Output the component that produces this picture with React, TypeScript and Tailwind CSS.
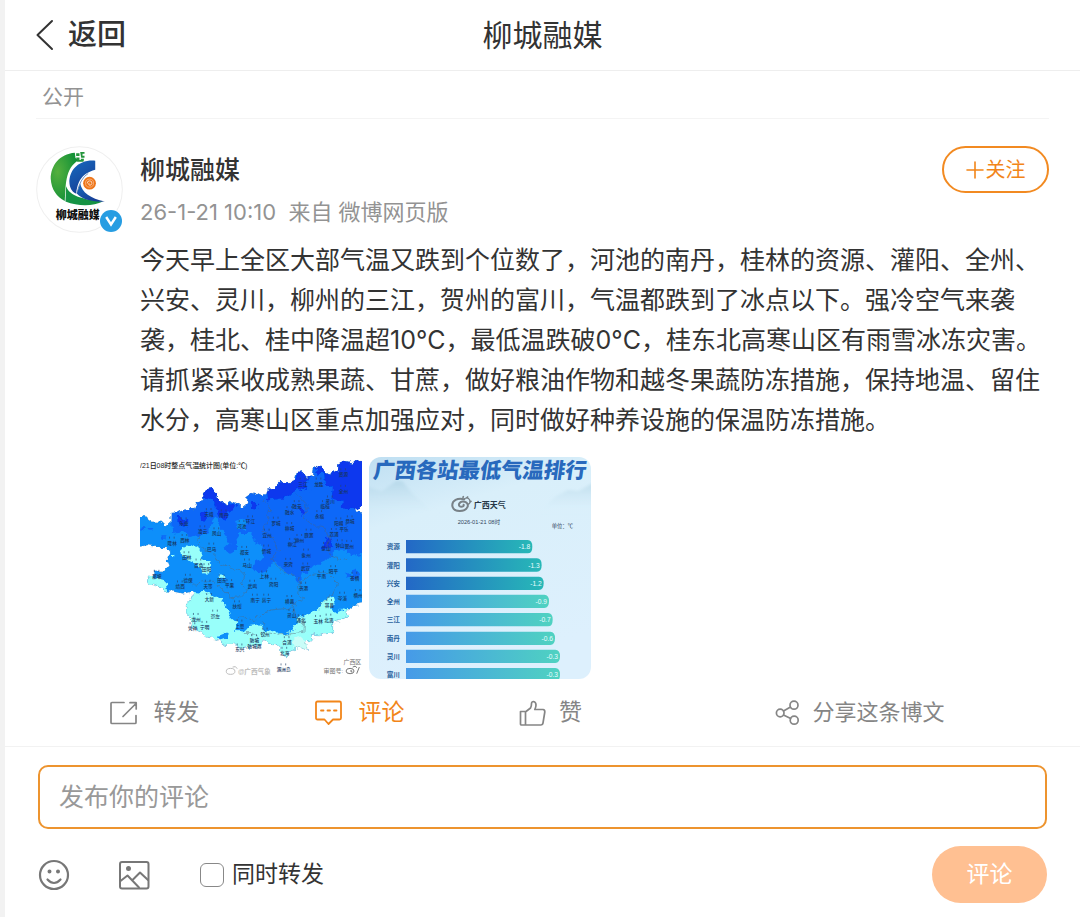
import React from "react";

const svgFont = "'Liberation Sans', 'Noto Sans CJK SC', sans-serif";

const mapLabels: [number, number, string][] = [
  [640, 76, "资源"], [640, 126, "全州"], [518, 104, "三江"], [566, 104, "龙胜"], [600, 158, "灵川"],
  [500, 172, "融安"], [585, 172, "临桂"], [478, 190, "融水"], [568, 202, "永福"], [235, 196, "天峨"],
  [280, 200, "南丹"], [160, 224, "乐业"], [360, 218, "环江"], [334, 232, "河池"], [437, 222, "罗城"],
  [478, 238, "柳城"], [626, 224, "阳朔"], [660, 218, "恭城"], [642, 242, "平乐"], [216, 248, "凌云"],
  [258, 254, "凤山"], [410, 258, "宜州"], [536, 258, "鹿寨"], [612, 256, "荔浦"], [124, 282, "隆林"],
  [162, 274, "西林"], [508, 274, "柳州"], [486, 286, "柳江"], [630, 290, "钟山"], [658, 292, "贺州"],
  [243, 300, "巴马"], [342, 310, "都安"], [408, 306, "忻城"], [588, 298, "蒙山"], [528, 318, "象州"],
  [168, 326, "田林"], [204, 348, "百色"], [228, 362, "田阳"], [350, 348, "马山"], [474, 346, "来宾"],
  [526, 360, "武宣"], [610, 368, "昭平"], [574, 384, "平南"], [674, 388, "苍梧"], [78, 382, "那坡"],
  [172, 394, "德保"], [274, 396, "田东"], [297, 410, "平果"], [402, 384, "上林"], [366, 412, "武鸣"],
  [430, 406, "宾阳"], [148, 414, "靖西"], [232, 412, "天等"], [520, 418, "贵港"], [637, 448, "岑溪"],
  [684, 440, "梧州"], [236, 452, "大新"], [374, 454, "南宁"], [408, 454, "邕宁"], [478, 458, "横县"],
  [320, 474, "扶绥"], [598, 470, "容县"], [254, 502, "崇左"], [196, 512, "龙州"], [484, 500, "灵山"],
  [596, 514, "北流"], [564, 518, "玉林"], [512, 516, "浦北"], [186, 540, "凭祥"], [222, 536, "宁明"],
  [328, 532, "上思"], [404, 556, "钦州"], [372, 576, "防城"], [470, 582, "合浦"], [372, 595, "防城港"],
  [328, 604, "东兴"], [463, 614, "北海"], [460, 664, "涠洲岛"],
];

const rankRows: { name: string; value: string; end: number; y: number; cold: boolean }[] = [
  { name: "资源", value: "-1.8", end: 502, y: 270, cold: true },
  { name: "灌阳", value: "-1.3", end: 530, y: 325, cold: true },
  { name: "兴安", value: "-1.2", end: 536, y: 380, cold: true },
  { name: "全州", value: "-0.9", end: 552, y: 434, cold: false },
  { name: "三江", value: "-0.7", end: 563, y: 489, cold: false },
  { name: "南丹", value: "-0.6", end: 570, y: 545, cold: false },
  { name: "灵川", value: "-0.3", end: 585, y: 599, cold: false },
  { name: "富川", value: "-0.3", end: 585, y: 654, cold: false },
];

const regionOutline =
  "M0 196 L48 204 L65 216 L92 216 L106 230 L118 222 L120 190 L142 188 L160 180 L190 178 L200 158 L218 154 L214 136 L226 118 L240 116 L258 130 L262 150 L278 156 L286 168 L304 154 L322 162 L334 174 L350 160 L352 140 L372 126 L394 136 L408 130 L412 116 L432 120 L444 104 L440 96 L468 98 L490 96 L496 70 L522 66 L530 84 L546 74 L548 54 L566 46 L582 64 L602 72 L622 60 L626 44 L648 34 L668 38 L680 28 L720 34 L720 166 L678 176 L682 190 L720 194 L720 458 L672 466 L650 484 L656 500 L640 510 L624 516 L608 512 L608 550 L580 556 L548 552 L544 570 L526 584 L532 604 L508 594 L480 606 L468 624 L456 606 L440 590 L412 582 L400 572 L384 590 L352 596 L330 600 L314 584 L280 586 L262 572 L222 562 L210 546 L180 532 L182 508 L166 490 L166 466 L182 446 L190 434 L180 426 L156 432 L130 426 L104 426 L86 412 L52 404 L46 388 L64 378 L72 364 L102 364 L116 348 L108 330 L116 308 L104 292 L76 292 L48 286 L0 296 Z";

function TemperatureMap() {
  return (
    <svg viewBox="27 21 669 669" className="block size-full" role="img" aria-label="21日08时整点气温统计图">
      <defs>
        <clipPath id="region">
          <path d={regionOutline} />
        </clipPath>
        <filter id="jagged" filterUnits="userSpaceOnUse" x="0" y="0" width="720" height="700">
          <feTurbulence type="fractalNoise" baseFrequency="0.06" numOctaves="2" seed="4" result="noise" />
          <feDisplacementMap in="SourceGraphic" in2="noise" scale="22" xChannelSelector="R" yChannelSelector="G" />
        </filter>
      </defs>
      <rect x="27" y="21" width="669" height="669" fill="#fff" />
      <g filter="url(#jagged)">
        <g clipPath="url(#region)">
          <rect x="0" y="0" width="720" height="700" fill="#0c8ffa" />
          <path
            d="M118 180 L220 90 L720 20 L720 310 L660 320 L650 300 L620 300 L590 330 L550 348 L530 370 L510 372 L512 400 L500 398 L496 374 L460 366 L436 336 L420 340 L416 362 L384 374 L368 356 L376 334 L398 328 L396 290 L370 276 L360 250 L330 250 L318 268 L320 300 L298 312 L280 300 L300 280 L272 240 L256 200 L238 226 L236 250 L206 256 L180 262 L160 244 L124 250 Z"
            fill="#0867f8"
          />
          <path d="M214 100 L260 110 L288 166 L316 162 L314 180 L290 190 L284 214 L268 206 L258 172 L240 146 L214 144 Z" fill="#0738ee" />
          <path d="M404 104 L446 98 L496 90 L500 60 L536 66 L542 100 L524 118 L500 114 L488 132 L456 146 L410 152 Z" fill="#0738ee" />
          <path d="M544 40 L590 40 L720 20 L720 180 L668 178 L636 176 L634 154 L604 146 L608 118 L584 100 L582 68 L560 70 Z" fill="#0738ee" />
          <path d="M542 76 L560 70 L582 74 L584 100 L550 116 L540 130 L528 104 Z" fill="#0867f8" />
          <g fill="#0738ee">
            <ellipse cx="372" cy="166" rx="11" ry="10" />
            <ellipse cx="216" cy="200" rx="12" ry="12" />
            <path d="M138 202 L152 204 L170 216 L164 234 L144 230 Z" />
            <ellipse cx="516" cy="184" rx="9" ry="14" />
            <path d="M588 262 L602 268 L606 286 L590 302 L578 294 Z" />
          </g>
          <g fill="#0867f8">
            <circle cx="36" cy="237" r="5" />
            <ellipse cx="57" cy="239" rx="7" ry="4" />
            <circle cx="99" cy="262" r="6" />
            <circle cx="651" cy="378" r="7" />
            <path d="M664 366 L682 360 L690 378 L680 392 L664 386 Z" />
          </g>
          <path d="M314 214 L338 206 L350 224 L340 240 L320 238 Z" fill="#0c8ffa" />
          <g fill="#98fffa">
            <path d="M150 292 L174 286 L200 292 L210 312 L214 328 L236 340 L242 362 L232 372 L218 372 L210 354 L178 338 L154 316 Z" />
            <path d="M27 378 L62 380 L84 390 L108 398 L114 440 L40 430 Z" />
            <ellipse cx="274" cy="381" rx="10" ry="7" />
            <circle cx="127" cy="316" r="4" />
            <path d="M140 440 L186 430 L204 432 L216 426 L232 430 L250 446 L270 444 L276 460 L290 472 L298 500 L310 510 L320 520 L314 542 L346 544 L356 530 L388 526 L398 546 L430 542 L456 556 L484 548 L502 520 L504 502 L522 500 L550 486 L570 472 L582 452 L608 442 L614 460 L602 476 L618 490 L646 478 L670 490 L640 640 L200 620 Z" />
          </g>
          <path d="M504 558 L528 576 L532 604 L490 600 L486 578 Z" fill="#c9fdf8" />
          <path d="M262 560 L280 552 L292 556 L286 568 L268 574 Z" fill="#0c8ffa" />
        </g>
        <g fill="none" stroke="#596579" strokeWidth="2" opacity="0.7">
          <path d="M206 250 L200 278 L220 300 L250 314 L272 344 L310 356 L342 372 L332 400 L350 424 L330 442 L300 446 M188 412 L214 394 L250 396 L280 424 L300 446" />
          <path d="M400 150 L418 180 L410 214 L396 240 L430 270 L444 304 L424 324 L440 350 L456 368 L494 374 L510 398 L502 424 L520 450 L486 470 L494 502 L520 516 L518 550" />
          <path d="M494 130 L534 172 L520 204 L550 228 L590 238 L600 270 L590 300 L604 320 L648 330 M510 398 L548 374 L590 370 L620 400 L604 438 L574 462 L566 484" />
          <path d="M318 508 L350 504 L370 514 L396 494 L420 482 L486 476 M396 520 L404 550 L440 558 L518 550 M340 550 L364 550 L382 568" />
          <path d={regionOutline} stroke="#7c8998" strokeWidth="1" />
        </g>
      </g>
      <g fontFamily={svgFont} fill="#17355c" textAnchor="middle">
        {mapLabels.map(([x, y, name]) => (
          <text key={name} x={x} y={y + 3} fontSize="14" fontWeight="500">
            {name}
          </text>
        ))}
      </g>
      <g>
        {mapLabels.map(([x, y, name]) => (
          <path key={name} d={`M${x - 8} ${y - 21} v6 M${x + 6} ${y - 21} v6`} stroke="#29456d" strokeWidth="2" />
        ))}
      </g>
      <text x="27" y="54" fontFamily={svgFont} fontSize="21" fontWeight="500" fill="#222">
        /21日08时整点气温统计图(单位:℃)
      </text>
      <g fontFamily={svgFont} fontSize="20" fill="#777">
        <text x="640" y="646" fontSize="18">广西区</text>
        <text x="580" y="671" fontSize="18">审图号:</text>
        <g fill="none" stroke="#777" strokeWidth="3">
          <ellipse cx="660" cy="666" rx="12" ry="8" />
          <path d="M668 654 q8 -6 13 2 M660 666 q8 -4 5 4 M680 674 l8 -20" />
        </g>
        <g fill="none" stroke="#bbb" strokeWidth="3">
          <ellipse cx="300" cy="667" rx="13" ry="9" />
          <path d="M306 654 q10 -5 14 5" />
        </g>
        <text x="322" y="674" fill="#bbb" fontWeight="700">@广西气象</text>
      </g>
    </svg>
  );
}

function RankingChart() {
  return (
    <svg viewBox="12 21 666 666" className="block size-full" role="img" aria-label="广西各站最低气温排行">
      <defs>
        <linearGradient id="sky" x1="0" y1="0" x2="0.3" y2="1">
          <stop offset="0" stopColor="#bfdff2" />
          <stop offset="0.3" stopColor="#d9effa" />
          <stop offset="1" stopColor="#ddf0fd" />
        </linearGradient>
        <linearGradient id="cold">
          <stop offset="0" stopColor="#2368c6" />
          <stop offset="1" stopColor="#27b8b7" />
        </linearGradient>
        <linearGradient id="mild">
          <stop offset="0" stopColor="#469ae8" />
          <stop offset="1" stopColor="#4fd2c1" />
        </linearGradient>
        <linearGradient id="hill" x1="0" y1="0" x2="0" y2="1">
          <stop offset="0" stopColor="#a2cadd" stopOpacity="0.5" />
          <stop offset="0.9" stopColor="#d9effa" stopOpacity="0" />
        </linearGradient>
        <filter id="mist">
          <feGaussianBlur stdDeviation="4" />
        </filter>
      </defs>
      <rect x="12" y="21" width="666" height="666" fill="url(#sky)" />
      <g filter="url(#mist)">
        <path d="M0 108 L50 124 L94 92 L112 94 L142 130 L190 174 L220 190 L0 210 Z" fill="url(#hill)" />
        <path d="M520 190 L570 140 L610 120 L640 124 L690 96 L690 200 Z" fill="url(#hill)" />
      </g>
      <g fontFamily={svgFont}>
        <text x="24" y="84" fontSize="64" fontWeight="900" fill="#2869bd" transform="translate(10 0) skewX(-8)">
          广西各站最低气温排行
        </text>
        <g fill="none" stroke="#788187" strokeWidth="6" strokeLinecap="round">
          <path d="M298 148 C278 142 260 152 262 168 C266 188 300 188 308 170 C312 154 288 150 282 162 C280 174 298 172 296 164" />
          <path d="M296 148 q12 -10 18 2 q4 10 -6 14" strokeWidth="4" />
          <path d="M294 142 l1 -2 M306 143 l2 -2 M316 155 l2 -1" strokeWidth="5" />
        </g>
        <text x="326" y="173" fontSize="24" fontWeight="700" fill="#263747">广西天气</text>
        <text x="278" y="222" fontSize="17" fill="#32465d">2026-01-21 08时</text>
        <text x="560" y="233" fontSize="16" fill="#32465d">单位：℃</text>
        {rankRows.map((row) => (
          <g key={row.name}>
            <path
              d={`M123 ${row.y} H${row.end - 14} Q${row.end} ${row.y} ${row.end} ${row.y + 20} Q${row.end} ${row.y + 40} ${row.end - 14} ${row.y + 40} H123 Z`}
              fill={row.cold ? "url(#cold)" : "url(#mild)"}
            />
            <text x="65" y={row.y + 28} fontSize="20" fontWeight="700" fill="#28609c">{row.name}</text>
            <text x={row.end - 6} y={row.y + 28} fontSize="20" fill="#e8fcff" textAnchor="end">{row.value}</text>
          </g>
        ))}
      </g>
    </svg>
  );
}

function Avatar() {
  return (
    <div className="relative size-[87px] shrink-0">
      <svg viewBox="48 50 260 260" className="block size-full" role="img" aria-label="柳城融媒">
        <defs>
          <radialGradient id="leaf" cx="0.25" cy="0.4" r="0.8">
            <stop offset="0" stopColor="#55b03e" />
            <stop offset="1" stopColor="#078b36" />
          </radialGradient>
          <linearGradient id="wave" x1="0" y1="0" x2="0.5" y2="1">
            <stop offset="0" stopColor="#176bc0" />
            <stop offset="1" stopColor="#173f96" />
          </linearGradient>
        </defs>
        <circle cx="178" cy="180" r="128" fill="#fff" stroke="#efefef" strokeWidth="3" />
        <path d="M164 70 C118 74 92 108 92 148 C94 180 110 202 134 214 C138 172 132 118 176 92 L166 86 Z" fill="url(#leaf)" />
        <path d="M138 170 C146 192 170 208 248 216 C220 230 176 232 136 216 Z" fill="#159344" />
        <path d="M168 72 h10 v8 h-10z M180 68 h13 v5 h-6 v6 h6 v6 h-10z M168 84 h10 v8 h12 v5 h-19z M182 88 h9 v6 h-9z" fill="#24953c" />
        <path d="M225 94 C174 90 146 124 148 162 C150 180 160 190 168 192 C172 160 182 132 225 121 Z" fill="url(#wave)" />
        <path d="M180 162 C186 190 210 206 254 216 C212 218 184 208 170 192 Z" fill="url(#wave)" />
        <path d="M170 192 Q180 146 204 132" fill="none" stroke="#315e9f" strokeWidth="2" />
        <circle cx="208" cy="161" r="19" fill="#ed7519" />
        <circle cx="208" cy="161" r="12" fill="none" stroke="#ffc397" strokeWidth="2" />
        <path d="M201 162 q0 -8 8 -8 q7 1 6 8 q-2 7 -8 5 q-4 -4 1 -7" fill="none" stroke="#fff" strokeWidth="2" />
        <text x="107" y="268" fontFamily={svgFont} fontWeight="900" fontSize="33" fill="#111">柳城融媒</text>
      </svg>
      <svg viewBox="0 0 24 24" className="absolute right-0 bottom-0 size-6" aria-hidden="true">
        <circle cx="12" cy="12" r="12" fill="#fff" />
        <circle cx="12" cy="12" r="11" fill="#279de2" />
        <path d="M7.2 8 L12 15.5 L16.8 8" fill="none" stroke="#fff" strokeWidth="2.4" />
      </svg>
    </div>
  );
}

const line = { fill: "none", stroke: "currentColor", strokeLinecap: "round", strokeLinejoin: "round" } as const;

function ActionBar() {
  return (
    <div className="ml-[47px] grid h-[67px] grid-cols-[205fr_205fr_177fr_441fr] text-[#858585]">
      <button className="flex items-center justify-center gap-4 text-[23px]">
        <svg viewBox="0 0 28 28" className="size-7" strokeWidth="1.7" {...line}>
          <path d="M14 3.5 H2 Q1 3.5 1 4.5 V23.5 Q1 24.5 2 24.5 H25 Q26 24.5 26 23.5 V16.5 M13 17.5 L26 4.5 M20 3.7 H26.2 V10" />
        </svg>
        转发
      </button>
      <button className="flex items-center justify-center gap-4 text-[23px] text-[#f28519]">
        <svg viewBox="0 0 28 28" className="size-7" strokeWidth="1.8" {...line}>
          <path d="M2.5 2.5 H24.5 Q26 2.5 26 4 V19 Q26 20.5 24.5 20.5 H18 L13.5 25 L9.5 20.5 H2.5 Q1 20.5 1 19 V4 Q1 2.5 2.5 2.5 Z M6 11.5 H8.5 M12.5 11.5 H15 M19 11.5 H21.5" />
        </svg>
        评论
      </button>
      <button className="flex items-center justify-center gap-3 text-[23px]">
        <svg viewBox="0 0 28 28" className="size-7" strokeWidth="1.7" {...line}>
          <path d="M1.5 12.5 H7 L11.5 9 Q12.5 7.5 12.5 4.5 Q12.7 2.5 14.5 2.5 Q17 3 17 6 Q17 8 15.8 10.5 H24 Q26 10.8 25.8 13 L24 24 Q23.7 26 22 26 H2.5 Q1.5 26 1.5 25 Z M6.5 12.5 V26" />
        </svg>
        赞
      </button>
      <button className="flex items-center justify-center gap-2.5 text-[22px]">
        <svg viewBox="0 0 28 28" className="size-7" strokeWidth="1.7" {...line}>
          <circle cx="6.2" cy="14" r="3.8" />
          <circle cx="20" cy="6.2" r="4" />
          <circle cx="20.2" cy="21.2" r="4" />
          <path d="M9.5 12.1 L16.5 8.1 M9.5 16 L16.7 19.5" />
        </svg>
        分享这条博文
      </button>
    </div>
  );
}

function CommentForm() {
  return (
    <form className="pt-[18px] pr-[33px] pb-3 pl-[33px]" onSubmit={(event) => event.preventDefault()}>
      <input
        type="text"
        aria-label="发布你的评论"
        placeholder="发布你的评论"
        className="block h-16 w-full rounded-[10px] border-2 border-[#ed942f] bg-white px-[19px] text-[25px] outline-none placeholder:text-[#999]"
      />
      <div className="mt-[17px] flex h-[57px] items-center">
        <button type="button" aria-label="表情" className="text-[#777]">
          <svg viewBox="0 0 32 32" className="size-8" strokeWidth="2.2" {...line}>
            <circle cx="16" cy="16" r="14" />
            <path d="M9.5 20.5 Q16 27.5 22.5 20.5" />
            <circle cx="11.5" cy="12.5" r="1.2" fill="currentColor" strokeWidth="1.6" />
            <circle cx="20" cy="12.5" r="1.2" fill="currentColor" strokeWidth="1.6" />
          </svg>
        </button>
        <button type="button" aria-label="图片" className="ml-12 text-[#777]">
          <svg viewBox="0 0 32 32" className="size-8" strokeWidth="2" {...line}>
            <rect x="2" y="3" width="28.5" height="26.5" rx="2" />
            <path d="M2.5 22 L9.5 16.5 L21 28.5 M15 20.5 L22 13.5 L30 21" />
            <circle cx="10.5" cy="9.5" r="1.5" fill="currentColor" />
          </svg>
        </button>
        <label className="ml-[50px] flex items-center gap-2 text-[23px] text-[#333]">
          <input type="checkbox" className="size-6 appearance-none rounded-md border-[1.5px] border-[#888] bg-white checked:bg-[#f28519]" />
          同时转发
        </label>
        <button type="submit" className="ml-auto h-[57px] w-[115px] rounded-full bg-[#ffc092] text-[23px] text-white">
          评论
        </button>
      </div>
    </form>
  );
}

export default function App() {
  return (
    <div className="min-h-screen border-l-[5px] border-[#f2f2f2] bg-white font-['Inter','Noto_Sans_CJK_SC',sans-serif] text-[#333]" lang="zh-CN">
      <header className="grid h-[71px] grid-cols-[1fr_auto_1fr] items-center border-b border-[#eee] px-[31px]">
        <button className="flex items-center gap-3 justify-self-start text-[29px] leading-10 font-medium">
          <svg viewBox="0 0 20 32" className="h-8 w-5" strokeWidth="2" {...line}>
            <path d="M16 2 L1.5 16 L16 30" />
          </svg>
          返回
        </button>
        <h1 className="text-[30px] leading-10">柳城融媒</h1>
      </header>
      <main>
        <article className="pr-[31px] pl-[31px]">
          <div className="flex h-12 items-center border-b border-[#f4f4f4] pt-1 pl-1.5 text-[21px] text-[#939393]">公开</div>
          <div className="flex gap-[17px] pt-[27px]">
            <Avatar />
            <div className="min-w-0 flex-1">
              <div className="flex items-start justify-between">
                <div>
                  <h2 className="pt-1 text-[25px] leading-10 font-medium">柳城融媒</h2>
                  <p className="text-[22px] leading-[44px] text-[#939393]">26-1-21 10:10&nbsp; 来自 微博网页版</p>
                </div>
                <button className="flex h-[47px] w-[107px] items-center justify-center gap-0.5 rounded-full border-2 border-[#f28a21] text-[20px] text-[#f28519]">
                  <svg viewBox="0 0 18 18" className="size-[18px]" strokeWidth="1.6" {...line}>
                    <path d="M1 9 H17 M9 1 V17" />
                  </svg>
                  关注
                </button>
              </div>
              <p className="mt-1.5 text-[25px] leading-10">
                今天早上全区大部气温又跌到个位数了，河池的南丹，桂林的资源、灌阳、全州、兴安、灵川，柳州的三江，贺州的富川，气温都跌到了冰点以下。强冷空气来袭袭，桂北、桂中降温超10°C，最低温跌破0°C，桂东北高寒山区有雨雪冰冻灾害。请抓紧采收成熟果蔬、甘蔗，做好粮油作物和越冬果蔬防冻措施，保持地温、留住水分，高寒山区重点加强应对，同时做好种养设施的保温防冻措施。
              </p>
              <div className="mt-[17px] flex gap-[7px]">
                <button className="size-[222px]" aria-label="查看气温统计图">
                  <TemperatureMap />
                </button>
                <button className="size-[222px] overflow-hidden rounded-xl" aria-label="查看最低气温排行">
                  <RankingChart />
                </button>
              </div>
            </div>
          </div>
        </article>
        <ActionBar />
        <div className="border-t border-[#f2f2f2]">
          <CommentForm />
        </div>
      </main>
    </div>
  );
}
